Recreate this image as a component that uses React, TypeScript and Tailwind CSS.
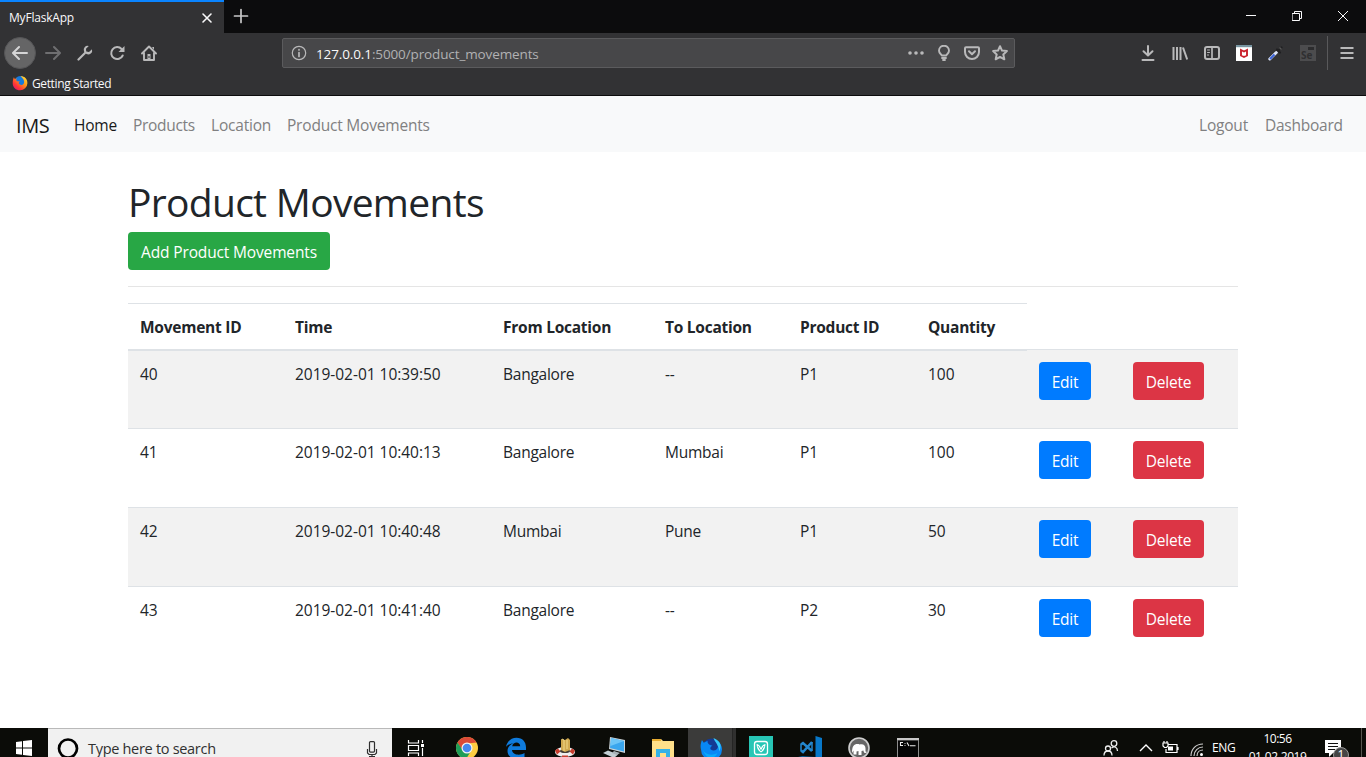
import React from "react";

type IconProps = { className?: string; children: React.ReactNode; box?: string };

function Icon({ className = "size-4", children, box = "0 0 16 16" }: IconProps) {
  return (
    <svg
      className={`shrink-0 ${className}`}
      viewBox={box}
      fill="none"
      stroke="currentColor"
      strokeWidth="2"
      strokeLinecap="round"
      strokeLinejoin="round"
    >
      {children}
    </svg>
  );
}

function FirefoxLogo() {
  return (
    <svg className="size-4 shrink-0" viewBox="0 0 16 16">
      <defs>
        <linearGradient id="ff" x1="1" y1="0" x2="0.1" y2="1">
          <stop offset="0" stopColor="#fff04a" />
          <stop offset="0.4" stopColor="#ff9a16" />
          <stop offset="0.75" stopColor="#ff3238" />
          <stop offset="1" stopColor="#d8107c" />
        </linearGradient>
      </defs>
      <circle cx="8.2" cy="6.800" r="5.8" fill="#1679dc" />
      <path d="M1.9 2.3 2.8 4l2.1-.5C4 4.700 4.100 5.700 5.200 6.200L7.800 6.500C6.500 7.500 6.200 8.500 7.800 9.500c2.200 1.200 4.600-.2 4.300-3C11.900 4.300 10.500 3 8.500 1c4.500.2 7 3.300 6.900 7.200A7.300 7.300 0 0 1 8 15.300C3.900 15.300.7 12.300.7 8.200c0-2.400.4-4.100 1.200-5.900Z" fill="url(#ff)" />
    </svg>
  );
}

function Titlebar() {
  return (
    <div className="flex h-[33px] bg-[#0c0c0d] text-[#f9f9fa]">
      <div className="flex w-56 items-center justify-between border-t-2 border-[#0a84ff] bg-[#323234] pr-[11px] pl-[9px]">
        <span className="text-[12px] tracking-[-0.2px]">MyFlaskApp</span>
        <Icon className="size-3" box="0 0 12 12"><path strokeWidth="1.6" d="m2 2 8 8M10 2 2 10" /></Icon>
      </div>
      <Icon className="ml-[9px] mt-2 size-4 text-[#c8c8c9]"><path strokeWidth="1.7" d="M8 1.500v13M1.500 8h13" /></Icon>
      <div className="ml-auto flex pt-[11px]">
        <Icon className="mr-[36px] size-[10px]" box="0 0 10 10"><path strokeWidth="1" strokeLinecap="butt" d="M0 4.500h10" /></Icon>
        <Icon className="mr-[36px] size-[10px]" box="0 0 10 10"><path strokeWidth="1" strokeLinejoin="miter" d="M.5 2.500h7v7h-7zM2.500 2.500v-2h7v7h-2" /></Icon>
        <Icon className="mr-[18px] size-[10px]" box="0 0 10 10"><path strokeWidth="1" d="m0 0 10 10M10 0 0 10" /></Icon>
      </div>
    </div>
  );
}

function Toolbar() {
  return (
    <div className="flex h-10 items-center bg-[#323234] text-[#b9b9ba]">
      <div className="ml-1 flex size-8 items-center justify-center rounded-full border border-[#555557] bg-[#656566] text-[#d5d5d6]">
        <Icon><path d="M15 8H1.500M7 2 1 8l6 6" /></Icon>
      </div>
      <Icon className="ml-[9px] size-4 text-[#6f6f71]"><path d="M1 8h13.500M9 2l6 6-6 6" /></Icon>
      <Icon className="ml-4 size-4">
        <path d="M1.500 14.500 8.500 7.500" strokeWidth="2.200" />
        <path d="M11.800 1A4 4 0 0 0 7 6.500L9.500 9A4 4 0 0 0 15 4.200L12 7 9.200 6.500 9 3.800Z" fill="currentColor" stroke="none" />
      </Icon>
      <Icon className="ml-4 size-4"><path d="M13.700 10.500A6 6 0 1 1 12.600 4" /><path d="M15.500 1v6h-6Z" fill="currentColor" stroke="none" /></Icon>
      <Icon className="ml-4 size-4">
        <path d="m1 8.500 7-7 7 7M3 8v7h10V8" strokeWidth="1.900" />
        <path d="M11 2h2v3M6.500 9h3v6h-3z" fill="currentColor" stroke="none" />
        <path d="M7.800 12h.4" stroke="#323234" strokeWidth="1.400" />
      </Icon>
      <div className="ml-[125px] flex h-[30px] w-[733px] items-center rounded-[2px] border border-[#5b5b5d] bg-[#474749] pl-[8px] pr-[6px]">
        <Icon className="size-4"><circle cx="8" cy="8" r="6.700" strokeWidth="1.200" /><path d="M8 7.500v4M8 4.700v.2" strokeWidth="1.700" /></Icon>
        <span className="ml-[9px] pt-[2px] text-[13.5px] tracking-[-0.12px] text-[#b1b1b3]"><span className="text-[#f9f9fa]">127.0.0.1</span>:5000/product_movements</span>
        <Icon className="ml-auto size-4"><path d="M2 8h.01M8 8h.01M14 8h.01" strokeWidth="3.600" /></Icon>
        <Icon className="ml-3 size-4"><path d="M5.800 10.500C5.600 9.300 3 8.500 3 5.700a5 5 0 0 1 10 0c0 2.800-2.600 3.600-2.800 4.800Z" strokeWidth="1.900" /><path d="M6 13h4M7 15h2" strokeWidth="1.800" /></Icon>
        <Icon className="ml-3 size-4"><path d="M2 2.200h12c.6 0 1 .4 1 1V7A7 7 0 0 1 1 7V3.200c0-.6.4-1 1-1Z" /><path d="m5 6.200 3 3 3-3" /></Icon>
        <Icon className="ml-3 size-4"><path d="m8 1.200 2 4.400 4.900.5-3.600 3.300 1 4.900L8 11.900l-4.300 2.400 1-4.900L1.100 6.100 6 5.600Z" /></Icon>
      </div>
      <div className="ml-auto flex items-center gap-4">
        <Icon><path d="M8 1v9M3.500 6.200 8 10.500l4.500-4.300M2.500 15h11" /></Icon>
        <Icon><path d="M1.500 2v13M5 2v13M8.500 2v13M11 2.500l4.200 12" strokeWidth="2" strokeLinecap="butt" /></Icon>
        <Icon><rect x="1" y="2" width="14" height="12" rx="2" /><path d="M8 2v12" strokeWidth="1.700" /><path d="M3.500 5h2M3.500 7.500h2M3.500 10h1" strokeWidth="1" /></Icon>
        <svg className="size-4" viewBox="0 0 16 16"><path d="M0 0h16v16H0z" fill="#fff" /><path fill="#7895a1" d="M0 0h16v2.200H0z" /><path d="M5 5 8 6.500 11 5v5.500l-3 1.500-3-1.500Z" fill="none" stroke="#c9202b" strokeWidth="1.900" /></svg>
        <svg className="size-4" viewBox="0 0 16 16"><path d="m1.800 14 6.500-6.500" stroke="#dbe2f5" strokeWidth="3" strokeLinecap="round" /><path d="m2 14 4.500-4.500" stroke="#3c63d8" strokeWidth="2.200" /><path d="m9 4.500 3 3M10.500 5.500l3-3" stroke="#202022" strokeWidth="2.200" strokeLinecap="round" /><path d="m11.500 2.500 2 2" stroke="#555" strokeWidth="1.500" /></svg>
        <div className="flex size-4 flex-col items-start justify-end bg-[#4c4c4e] pl-px">
          <span className="ml-auto mr-[2px] h-[3px] w-[6px] shrink-0 bg-[#2c2c2e]" />
          <span className="text-[10px] leading-[11px] font-bold text-[#2f2f31]">Se</span>
        </div>
      </div>
      <div className="ml-[11px] h-[34px] w-px bg-[#59595b]" />
      <Icon className="mr-[11px] ml-[11px] size-4"><path d="M2.500 3h11M2.500 8h11M2.500 13h11" strokeLinecap="square" /></Icon>
    </div>
  );
}

function Navbar() {
  return (
    <nav className="flex h-14 items-center bg-[#f8f9fa] px-4 pt-1 text-[15.5px] tracking-[-0.2px] text-[#808081]">
      <span className="w-[58px] text-[20px] tracking-[-0.4px] text-[#191919]">IMS</span>
      <span className="w-[59px] text-[#191919]">Home</span>
      <span className="w-[78px] tracking-[-0.3px]">Products</span>
      <span className="w-[76px]">Location</span>
      <span>Product Movements</span>
      <span className="ml-auto w-[66px]">Logout</span>
      <span className="w-[85px] tracking-[-0.25px]">Dashboard</span>
    </nav>
  );
}

const rows = [
  ["40", "2019-02-01 10:39:50", "Bangalore", "--", "P1", "100"],
  ["41", "2019-02-01 10:40:13", "Bangalore", "Mumbai", "P1", "100"],
  ["42", "2019-02-01 10:40:48", "Mumbai", "Pune", "P1", "50"],
  ["43", "2019-02-01 10:41:40", "Bangalore", "--", "P2", "30"],
];
const heads = ["Movement ID", "Time", "From Location", "To Location", "Product ID", "Quantity"];
const columns = "grid grid-cols-[155px_208px_162px_135px_128px_111px_94px_117px]";

function Movements() {
  return (
    <main className="mx-auto h-[576px] w-[1110px] text-[15.5px] tracking-[-0.25px] text-[#212529]">
      <h1 className="pt-[26px] text-[39px] leading-[48px] tracking-[-0.7px]">Product Movements</h1>
      <button className="mt-[6px] flex h-[38px] w-[202px] items-center justify-center rounded bg-[#28a745] pt-1 tracking-[-0.15px] text-white">Add Product Movements</button>
      <hr className="mt-4 mb-4 border-[#e5e5e5]" />
      <div className={columns}>
        {heads.map((h) => (
          <div key={h} className="h-[46px] border-t border-[#dee2e6] pt-[11px] pl-3 leading-6 font-bold whitespace-nowrap">{h}</div>
        ))}
      </div>
      {rows.map((r, i) => (
        <div key={r[0]} className={`${columns} h-[79px] border-t border-[#dee2e6] ${i % 2 === 0 ? "bg-[#f2f2f2]" : "bg-white"}`}>
          {r.map((c, j) => (
            <div key={j} className={`pt-[11px] pl-3 leading-6 whitespace-nowrap ${i === 0 ? "border-t border-[#dee2e6]" : ""} ${j === 2 || j === 3 ? "" : "tracking-[-0.03px]"}`}>{c}</div>
          ))}
          <div className="pt-3 pl-3"><button className="flex h-[38px] w-[52px] items-center justify-center rounded bg-[#007bff] pt-1 text-white">Edit</button></div>
          <div className="pt-3 pl-3"><button className="flex h-[38px] w-[71px] items-center justify-center rounded bg-[#dc3545] pt-1 text-white">Delete</button></div>
        </div>
      ))}
    </main>
  );
}

function TaskApps() {
  return (
    <div className="flex h-10 text-white">
      <div className="flex w-12 items-center justify-center">
        <svg className="size-[18px]" viewBox="0 0 18 18" fill="none" stroke="#fff" strokeWidth="1.200"><path d="M1.500 1v3h10V1M1.500 17v-3h10v3M1.500 6.500h10v5h-10zM15.500 1v3M15.500 9v8" /><path d="M14 5h3v3h-3z" fill="#fff" stroke="none" /></svg>
      </div>
      <div className="flex w-[49px] items-center justify-center pl-1">
        <svg className="size-[22px]" viewBox="0 0 24 24"><circle cx="12" cy="12" r="12" fill="#ffcd42" /><path d="M1.600 6A12 12 0 0 1 22.400 6L12 7l-5 8Z" fill="#dc4a38" /><path d="M1.600 6A12 12 0 0 0 11 24l5.500-9L7 14Z" fill="#1f9d58" /><circle cx="12" cy="12" r="6" fill="#f4f4f4" /><circle cx="12" cy="12" r="4.700" fill="#4688f1" /></svg>
      </div>
      <div className="flex w-[49px] items-center justify-center pl-1">
        <svg className="size-[22px]" viewBox="0 0 22 22" fill="#0f7bdc"><path d="M1 10C2 4 6.500.8 11.500.8 17.500.8 21 5 21 10.500V13H7c.2 5 8 6 12.500 3v4.500C13 24 2.500 22 2.500 14c0-4 2.500-6.500 6-7.800C5 6.500 2.500 8 1 10Zm6.200-.8h8C15 4.200 8 4.500 7.200 9.200Z" /></svg>
      </div>
      <div className="flex w-[49px] items-center justify-center pl-1">
        <svg className="size-[22px]" viewBox="0 0 22 22"><ellipse cx="11" cy="15" rx="10" ry="5" fill="#eee" /><path d="m1 13.500 3-2 2.500 3-3.500 3ZM21 13.500l-3-2-2.500 3 3.500 3ZM8 18.500h6v2H8Z" fill="#c83d2d" /><ellipse cx="11" cy="14" rx="5" ry="2" fill="#443d35" /><path d="m7 2 4 1 3-2 2 2v10l-5 2-4-2Z" fill="#d1a94f" /><path d="m8 2 2 1v11M13 3v9" stroke="#f2db8c" fill="none" /></svg>
      </div>
      <div className="flex w-[49px] items-center justify-center pl-1">
        <svg className="size-[24px]" viewBox="0 0 24 24"><path d="m8 1 15 3v13L7 13Z" fill="#cbd4d8" /><path d="m9 2 13 3v10.500L8 12Z" fill="#3aa6ee" /><path d="m9 2 13 3-13.500 5Z" fill="#6dc5f7" /><path d="m1 17 5-2.500 10 4-4 3.500Z" fill="#c3ced3" /><path d="m12 15 6 2-3 2-5-2Z" fill="#a8b2b7" /></svg>
      </div>
      <div className="flex w-[52px] items-center justify-center pl-[2px]">
        <svg className="size-[22px]" viewBox="0 0 22 22"><path d="M0 2h9l2 2h11v16H0Z" fill="#ffe08a" /><path d="M0 2h9v2H0Z" fill="#e8ad31" /><path d="M4 12h14v10h-4v-6H8v6H4Z" fill="#35b2e7" /></svg>
      </div>
      <div className="flex w-[45px] items-center justify-center border-r border-[#252524] bg-[#3b3b3a] pl-[3px]">
        <svg className="size-[23px]" viewBox="0 0 24 24"><circle cx="12" cy="11.500" r="10" fill="#143a94" /><path d="m2 3 2 3 4-2c-.5 2 .3 3 2 4l3 1c-4 2-2 5 1 5 5 0 7-5 1-11 5 1 8 5 8 10A11 11 0 0 1 1 13C0 9 1 6 2 3Z" fill="#0888f5" /><path d="M14 1c8 3 9 9 6 14 0-6-4-9-6-14Z" fill="#36c8fb" /><path d="M3 13c2 5 8 7 15 4-3 7-12 7-15-4Z" fill="#08aafa" /></svg>
      </div>
      <div className="flex w-[3px] bg-[#30302f]" />
      <div className="flex w-[49px] items-center justify-center">
        <svg className="size-6" viewBox="0 0 24 24"><path d="M0 0h24v24H0Z" fill="#27c6b5" /><rect x="5.500" y="5.500" width="13" height="13" rx="2.500" fill="none" stroke="#fff" strokeWidth="1.300" /><path d="M7.500 8c2 .2 3.500 1.500 4.500 4 1-2.500 2.500-3.800 4.500-4-.2 4-1.500 7-4.500 8.500C9 15 7.700 12 7.500 8Z" fill="#fff" /><path d="m9 10 3 5 3-5" fill="none" stroke="#27c6b5" strokeWidth=".9" /></svg>
      </div>
      <div className="flex w-[49px] items-center justify-center">
        <svg className="size-6" viewBox="0 0 24 24"><path d="m17.500 0 6.500 2v20l-6.500 2L0 20l17.500 1Z" fill="#0878c9" /><path d="M3 8.500 5 7l9 8M3 14.500 5 16l9-10" fill="none" stroke="#2487ce" strokeWidth="2.500" /><path d="M3 8v7M14 6v9" stroke="#2487ce" strokeWidth="1.500" /></svg>
      </div>
      <div className="flex w-[49px] items-center justify-center">
        <svg className="size-[22px]" viewBox="0 0 22 22"><circle cx="11" cy="11" r="10" fill="#666" stroke="#cfcfcf" strokeWidth="1.600" /><path d="M4 16c0-7 2-9 5.500-9 1 0 1.500 0 2 .5 4-1 6 1 6 4v3l1.500.5c-1.500 2-3.500 1-3.500-1.500l-2 .5v4h-3v-4l-2 .5v3H5.500v-4Z" fill="#fff" /></svg>
      </div>
      <div className="flex w-[49px] items-center justify-center">
        <svg className="size-[22px]" viewBox="0 0 22 22"><path d="M0 1h22v20H0Z" fill="#8d8d8d" /><path d="M0 1h22v2H0Z" fill="#c8c8c8" /><path d="M1 3.500h20V20H1Z" fill="#060606" /><path d="M6 5.500H3.500v3H6M8 6v.800M8 8v.800M10 5.500l2 3.500M13 8.800h5.500" stroke="#eee" strokeWidth="1.100" fill="none" /></svg>
      </div>
    </div>
  );
}

function Taskbar() {
  return (
    <div className="flex h-[29px] overflow-hidden bg-[#0b0c08]">
      <div className="flex h-10 w-12 shrink-0 items-center justify-center">
        <svg className="size-4" viewBox="0 0 16 16" fill="#fff"><path d="m0 2 6-.8v6.300H0zM7 1l9-1v7.500H7zM0 8.500h6v6.300L0 14zM7 8.500h9V16l-9-1z" /></svg>
      </div>
      <div className="flex h-10 w-[344px] shrink-0 items-center border-t border-[#b9b9b9] bg-[#f1f1f1] pr-[12px] pl-[9px] text-[#303030]">
        <svg className="size-[22px]" viewBox="0 0 22 22"><circle cx="11" cy="10.500" r="9" fill="none" stroke="#000" strokeWidth="2.700" /></svg>
        <span className="ml-[9px] text-[14.500px] tracking-[-0.3px]">Type here to search</span>
        <svg className="ml-auto size-4" viewBox="0 0 16 16" fill="none" stroke="#303030" strokeWidth="1.200"><rect x="5.500" y=".6" width="5" height="10.500" rx="1" /><path d="M3.500 8v4L5 13.500h6l1.500-1.500V8M8 13.500V16M5 15.500h6" /></svg>
      </div>
      <TaskApps />
      <div className="ml-auto flex h-10 items-center text-white">
        <svg className="mr-[20px] size-4" viewBox="0 0 16 16" fill="none" stroke="#eee" strokeWidth="1.300"><circle cx="11" cy="3.500" r="2.800" /><circle cx="5" cy="8.500" r="2.500" /><path d="M1 15.500c0-6 8-6 8 0M8.500 8c3-2.500 6-.5 6 3" /></svg>
        <svg className="mr-[9px] size-[14px]" viewBox="0 0 14 14" fill="none" stroke="#fff" strokeWidth="1.400"><path d="m1 10 6-6 6 6" /></svg>
        <svg className="mr-[11px] h-4 w-[17px]" viewBox="0 0 17 16" fill="none" stroke="#fff" strokeWidth="1.200"><path d="M6 4.500h9v8H4V9M16 7v3" /><path d="M1 3h5v3L4.500 7.500h-2L1 6ZM2 3V1M5 3V1" /><path d="M6 6.500h5v4H6Z" fill="#fff" stroke="none" /></svg>
        <svg className="mr-[8px] mt-[2px] size-[14px]" viewBox="0 0 14 14" fill="none" stroke="#ccc" strokeWidth="1.200"><path d="M1 14C1 7 6 2 13 2M4 14c0-5 4-9 9-9M7 14c0-4 3-6 6-6" /><circle cx="11.500" cy="12.500" r="1.500" fill="#fff" stroke="none" /></svg>
        <span className="w-[24px] text-[12px] tracking-[-0.3px]">ENG</span>
        <div className="ml-[12px] flex w-[59px] flex-col items-center text-[12px] leading-[18px] tracking-[-0.5px] whitespace-nowrap"><span>10:56</span><span>01-02-2019</span></div>
        <div className="relative ml-[18px] mr-[19px] size-[17px]">
          <svg className="size-[17px]" viewBox="0 0 17 17"><path d="M0 0h16v13H8l-4 4v-4H0Z" fill="#fff" /><path d="M3 3.500h10M3 6.500h10M3 9.500h7" stroke="#111" /></svg>
          <span className="absolute top-[7px] left-[8px] flex size-4 items-center justify-center rounded-full border border-[#999] bg-[#454545] text-[12px] leading-3">1</span>
        </div>
        <div className="mr-[4px] h-10 w-px bg-[#55564f]" />
      </div>
    </div>
  );
}

export default function App() {
  return (
    <div className="flex h-[757px] w-[1366px] flex-col overflow-hidden bg-white font-['Open_Sans','Noto_Sans',sans-serif]">
      <Titlebar />
      <Toolbar />
      <div className="flex h-[23px] items-center border-b border-[#0c0c0d] bg-[#323234] pb-[2px] pl-3 text-[12px] tracking-[-0.38px] text-[#f9f9fa]">
        <FirefoxLogo /><span className="ml-1 pt-px">Getting Started</span>
      </div>
      <Navbar />
      <Movements />
      <Taskbar />
    </div>
  );
}
